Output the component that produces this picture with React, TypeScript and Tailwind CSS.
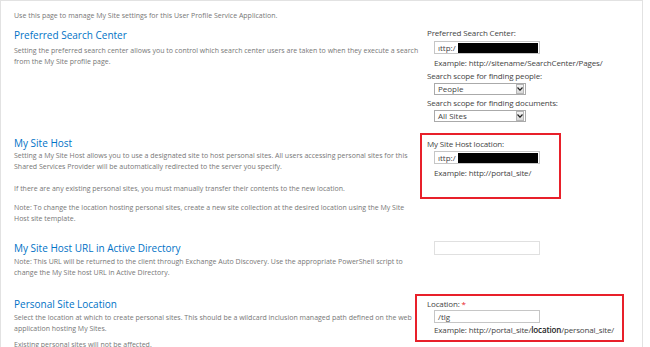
import type { ReactNode } from "react";

const body = "font-['Open_Sans','Liberation_Sans',sans-serif]";

function Heading({ children }: { children: ReactNode }) {
  return (
    <h2 className="text-[10px] leading-[14px] text-[#0072c6] font-normal">
      {children}
    </h2>
  );
}

function Desc({ lines, className = "" }: { lines: string[]; className?: string }) {
  return (
    <p className={`text-[7px] leading-[11px] text-[#777] ${className}`}>
      {lines.map((l, i) => (
        <span key={i} className="block whitespace-nowrap">
          {l}
        </span>
      ))}
    </p>
  );
}

function Label({ children, className = "" }: { children: ReactNode; className?: string }) {
  return (
    <div className={`text-[8px] leading-[11px] tracking-[-0.15px] text-[#444] whitespace-nowrap ${className}`}>
      {children}
    </div>
  );
}

function TextBox({ value, redacted = false, className = "" }: { value?: string; redacted?: boolean; className?: string }) {
  return (
    <div
      className={`ml-[7px] w-[106px] h-[13px] border border-[#c6c6c6] bg-white flex items-center pl-[3px] text-[8px] text-[#444] ${className}`}
    >
      {value && <span className="leading-none">{value}</span>}
      {redacted && <span className="ml-[2px] h-[10px] flex-1 mr-[1px] bg-black" />}
    </div>
  );
}

function Select({ value, className = "" }: { value: string; className?: string }) {
  return (
    <div
      className={`ml-[7px] w-[92px] h-[12px] border border-[#aaa] bg-white flex items-center text-[8px] text-[#444] ${className}`}
    >
      <span className="flex-1 pl-[3px] leading-none">{value}</span>
      <span className="w-[8px] h-[10px] mr-px bg-gradient-to-b from-[#f4f4f4] to-[#d8d8d8] border border-[#b5b5b5] flex items-center justify-center">
        <svg width="6" height="4" viewBox="0 0 6 4">
          <path d="M0.5 0.5 L3 3.2 L5.5 0.5" fill="none" stroke="#222" strokeWidth="1.2" />
        </svg>
      </span>
    </div>
  );
}

export default function App() {
  return (
    <div className={`w-[650px] h-[347px] bg-white overflow-hidden ${body}`}>
      <div className="w-[643px] h-[347px] border-t border-l border-r border-[#e2e2e2] pt-[9px]">
        <Desc className="pl-[13px]" lines={["Use this page to manage My Site settings for this User Profile Service Application."]} />

        {/* Preferred Search Center */}
        <div className="flex h-[106px]">
          <div className="w-[407px] pl-[13px] pt-[7px]">
            <Heading>Preferred Search Center</Heading>
            <Desc
              className="mt-[3px]"
              lines={[
                "Setting the preferred search center allows you to control which search center users are taken to when they execute a search",
                "from the My Site profile page.",
              ]}
            />
          </div>
          <div className="flex-1 pl-[19px] pt-[6px]">
            <Label>Preferred Search Center:</Label>
            <TextBox className="mt-[3px]" value="ıttp:/" redacted />
            <Label className="mt-[3px] pl-[7px]">Example: http://sitename/SearchCenter/Pages/</Label>
            <Label className="mt-[2px]">Search scope for finding people:</Label>
            <Select className="mt-[2px]" value="People" />
            <Label className="mt-[2px]">Search scope for finding documents:</Label>
            <Select className="mt-[2px]" value="All Sites" />
          </div>
        </div>

        {/* My Site Host */}
        <div className="flex h-[102px]">
          <div className="w-[407px] pl-[13px] pt-[9px]">
            <Heading>My Site Host</Heading>
            <Desc
              lines={[
                "Setting a My Site Host allows you to use a designated site to host personal sites. All users accessing personal sites for this",
                "Shared Services Provider will be automatically redirected to the server you specify.",
              ]}
            />
            <Desc
              className="mt-[11px]"
              lines={["If there are any existing personal sites, you must manually transfer their contents to the new location."]}
            />
            <Desc
              className="mt-[8px]"
              lines={[
                "Note: To change the location hosting personal sites, create a new site collection at the desired location using the My Site",
                "Host site template.",
              ]}
            />
          </div>
          <div className="flex-1 pl-[12px] pt-[6px]">
            <div className="w-[141px] h-[66px] border-2 border-[#e8202a] pl-[5px] pt-[3px]">
              <Label>My Site Host location:</Label>
              <TextBox className="mt-[2px]" value="ıttp:/" redacted />
              <Label className="mt-[3px] pl-[7px]">Example: http://portal_site/</Label>
            </div>
          </div>
        </div>

        {/* My Site Host URL in Active Directory */}
        <div className="flex h-[57px]">
          <div className="w-[407px] pl-[13px] pt-[12px]">
            <Heading>My Site Host URL in Active Directory</Heading>
            <Desc
              className="mt-[1px]"
              lines={[
                "Note: This URL will be returned to the client through Exchange Auto Discovery. Use the appropriate PowerShell script to",
                "change the My Site host URL in Active Directory.",
              ]}
            />
          </div>
          <div className="flex-1 pl-[19px] pt-[12px]">
            <TextBox className="h-[14px] border-[#e0e0e0]" />
          </div>
        </div>

        {/* Personal Site Location */}
        <div className="flex">
          <div className="w-[407px] pl-[13px] pt-[11px]">
            <Heading>Personal Site Location</Heading>
            <Desc
              className="mt-[1px]"
              lines={[
                "Select the location at which to create personal sites. This should be a wildcard inclusion managed path defined on the web",
                "application hosting My Sites.",
              ]}
            />
            <Desc className="mt-[5px]" lines={["Existing personal sites will not be affected."]} />
          </div>
          <div className="flex-1 pl-[7px] pt-[8px]">
            <div className="w-[209px] h-[48px] border-2 border-[#e8202a] pl-[10px] pt-[2px]">
              <Label>
                Location: <span className="text-[#e8202a]">*</span>
              </Label>
              <TextBox className="mt-[1px]" value="/tlg" />
              <Label className="mt-[1px] pl-[7px]">
                Example: http://portal_site/<span className="font-semibold text-[#222]">location</span>/personal_site/
              </Label>
            </div>
          </div>
        </div>
      </div>
    </div>
  );
}
